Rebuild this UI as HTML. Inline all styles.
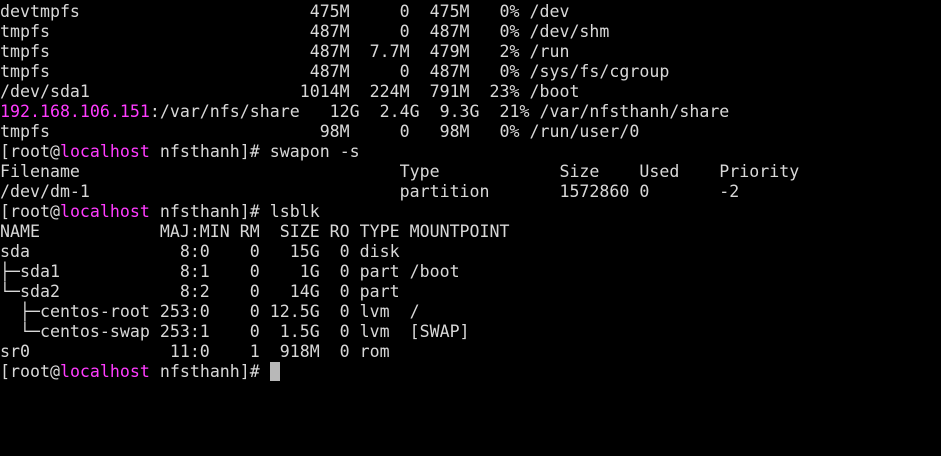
<!DOCTYPE html>
<html><head><meta charset="utf-8"><style>
html,body{margin:0;padding:0;background:#000;width:941px;height:456px;overflow:hidden}
pre{margin:0;position:absolute;left:0;top:2px;font-family:"DejaVu Sans Mono","Liberation Mono",monospace;font-size:16.6px;line-height:20px;color:#d8d8d8}
.m{color:#ff3cff}
.c{display:inline-block;width:10px;height:19px;background:#b8b8b8;vertical-align:-4px}
</style></head><body><pre>devtmpfs                       475M     0  475M   0% /dev
tmpfs                          487M     0  487M   0% /dev/shm
tmpfs                          487M  7.7M  479M   2% /run
tmpfs                          487M     0  487M   0% /sys/fs/cgroup
/dev/sda1                     1014M  224M  791M  23% /boot
<span class="m">192.168.106.151</span>:/var/nfs/share   12G  2.4G  9.3G  21% /var/nfsthanh/share
tmpfs                           98M     0   98M   0% /run/user/0
[root@<span class="m">localhost</span> nfsthanh]# swapon -s
Filename                                Type            Size    Used    Priority
/dev/dm-1                               partition       1572860 0       -2
[root@<span class="m">localhost</span> nfsthanh]# lsblk
NAME            MAJ:MIN RM  SIZE RO TYPE MOUNTPOINT
sda               8:0    0   15G  0 disk
├─sda1            8:1    0    1G  0 part /boot
└─sda2            8:2    0   14G  0 part
  ├─centos-root 253:0    0 12.5G  0 lvm  /
  └─centos-swap 253:1    0  1.5G  0 lvm  [SWAP]
sr0              11:0    1  918M  0 rom
[root@<span class="m">localhost</span> nfsthanh]# <span class="c"></span></pre></body></html>
